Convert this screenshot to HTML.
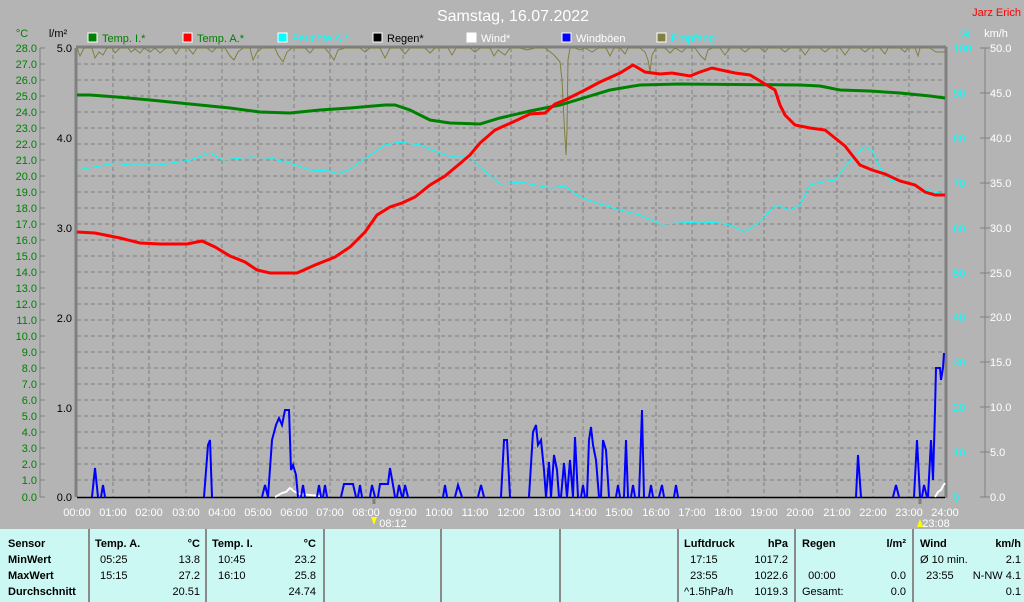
<!DOCTYPE html>
<html><head><meta charset="utf-8"><style>
html,body{margin:0;padding:0;width:1024px;height:602px;overflow:hidden;background:#b4b4b4;font-family:"Liberation Sans",sans-serif;}
svg{position:absolute;left:0;top:0}
.tbl{position:absolute;left:0;top:529px;width:1024px;height:73px;background:#ccf8f4;}
.c{position:absolute;font-size:11px;color:#000;line-height:16px;white-space:pre}
.b{font-weight:bold}
.sep{position:absolute;top:0;width:2px;height:73px;background:#8a8a8a}
</style></head><body>
<svg width="1024" height="529" xmlns="http://www.w3.org/2000/svg" font-family="Liberation Sans, sans-serif">
<text x="513" y="21" fill="#fff" font-size="16" text-anchor="middle">Samstag, 16.07.2022</text>
<text x="1021" y="16" fill="#ff0000" font-size="11" text-anchor="end">Jarz Erich</text>
<g font-size="11">
<text x="22" y="37" fill="#008000" text-anchor="middle">°C</text>
<text x="58" y="37" fill="#000" text-anchor="middle">l/m²</text>
<text x="965" y="37" fill="#00ffff" text-anchor="middle">%</text>
<text x="996" y="37" fill="#fff" text-anchor="middle">km/h</text>
<rect x="88" y="33" width="9" height="9" fill="#008000" stroke="#fff"/><text x="102" y="42" fill="#008000">Temp. I.*</text>
<rect x="183" y="33" width="9" height="9" fill="#ff0000" stroke="#fff"/><text x="197" y="42" fill="#008000">Temp. A.*</text>
<rect x="278" y="33" width="9" height="9" fill="#00ffff" stroke="#fff"/><text x="292" y="42" fill="#00ffff">Feuchte A.*</text>
<rect x="373" y="33" width="9" height="9" fill="#000" stroke="#fff"/><text x="387" y="42" fill="#000">Regen*</text>
<rect x="467" y="33" width="9" height="9" fill="#fff" stroke="#fff"/><text x="481" y="42" fill="#fff">Wind*</text>
<rect x="562" y="33" width="9" height="9" fill="#0000ff" stroke="#fff"/><text x="576" y="42" fill="#fff">Windböen</text>
<rect x="657" y="33" width="9" height="9" fill="#808040" stroke="#fff"/><text x="671" y="42" fill="#00ffff">Empfang</text>
</g>
<g stroke="#808080" stroke-dasharray="4,3" stroke-width="1">
<path d="M77 64H945M77 80H945M77 96H945M77 112H945M77 128H945M77 144H945M77 160H945M77 176H945M77 192H945M77 208H945M77 224H945M77 240H945M77 256H945M77 272H945M77 288H945M77 304H945M77 320H945M77 336H945M77 352H945M77 368H945M77 384H945M77 400H945M77 416H945M77 432H945M77 448H945M77 464H945M77 480H945"/>
<path d="M113 48V497M149 48V497M186 48V497M222 48V497M258 48V497M294 48V497M330 48V497M366 48V497M403 48V497M439 48V497M475 48V497M511 48V497M547 48V497M583 48V497M619 48V497M656 48V497M692 48V497M728 48V497M764 48V497M800 48V497M837 48V497M873 48V497M909 48V497"/>
</g>
<g stroke="#808080" stroke-width="3" fill="none">
<path d="M76 48V497M76 47H946M946 47V498"/>
</g>
<g stroke="#808080" stroke-width="1">
<path d="M40 48V497M985 48V497"/>
<path d="M40 48h5M40 64h5M40 80h5M40 96h5M40 112h5M40 128h5M40 144h5M40 160h5M40 176h5M40 192h5M40 208h5M40 224h5M40 240h5M40 256h5M40 272h5M40 288h5M40 304h5M40 320h5M40 336h5M40 352h5M40 368h5M40 384h5M40 400h5M40 416h5M40 432h5M40 448h5M40 464h5M40 480h5M40 497h5"/>
<path d="M980 48h10M980 93h10M980 138h10M980 183h10M980 228h10M980 273h10M980 317h10M980 362h10M980 407h10M980 452h10M980 497h10"/>
</g>
<path d="M77 497.5H945" stroke="#000" stroke-width="1.5"/>
<g stroke="#808080" stroke-width="3"><path d="M374 498v6M920 498v6"/></g>
<g font-size="11" fill="#008000" text-anchor="end">
<text x="37" y="52">28.0</text><text x="37" y="68">27.0</text><text x="37" y="84">26.0</text><text x="37" y="100">25.0</text><text x="37" y="116">24.0</text><text x="37" y="132">23.0</text><text x="37" y="148">22.0</text><text x="37" y="164">21.0</text><text x="37" y="180">20.0</text><text x="37" y="196">19.0</text><text x="37" y="212">18.0</text><text x="37" y="228">17.0</text><text x="37" y="244">16.0</text><text x="37" y="260">15.0</text><text x="37" y="276">14.0</text><text x="37" y="292">13.0</text><text x="37" y="308">12.0</text><text x="37" y="324">11.0</text><text x="37" y="340">10.0</text><text x="37" y="356">9.0</text><text x="37" y="372">8.0</text><text x="37" y="388">7.0</text><text x="37" y="404">6.0</text><text x="37" y="420">5.0</text><text x="37" y="436">4.0</text><text x="37" y="452">3.0</text><text x="37" y="468">2.0</text><text x="37" y="484">1.0</text><text x="37" y="501">0.0</text>
</g>
<g font-size="11" fill="#000" text-anchor="end">
<text x="72" y="52">5.0</text><text x="72" y="142">4.0</text><text x="72" y="232">3.0</text><text x="72" y="322">2.0</text><text x="72" y="412">1.0</text><text x="72" y="501">0.0</text>
</g>
<g font-size="11" fill="#00ffff">
<text x="953" y="52">100</text><text x="953" y="97">90</text><text x="953" y="142">80</text><text x="953" y="187">70</text><text x="953" y="232">60</text><text x="953" y="277">50</text><text x="953" y="321">40</text><text x="953" y="366">30</text><text x="953" y="411">20</text><text x="953" y="456">10</text><text x="953" y="501">0</text>
</g>
<g font-size="11" fill="#fff">
<text x="990" y="52">50.0</text><text x="990" y="97">45.0</text><text x="990" y="142">40.0</text><text x="990" y="187">35.0</text><text x="990" y="232">30.0</text><text x="990" y="277">25.0</text><text x="990" y="321">20.0</text><text x="990" y="366">15.0</text><text x="990" y="411">10.0</text><text x="990" y="456">5.0</text><text x="990" y="501">0.0</text>
</g>
<g font-size="11" fill="#fff" text-anchor="middle">
<text x="77" y="516">00:00</text><text x="113" y="516">01:00</text><text x="149" y="516">02:00</text><text x="186" y="516">03:00</text><text x="222" y="516">04:00</text><text x="258" y="516">05:00</text><text x="294" y="516">06:00</text><text x="330" y="516">07:00</text><text x="366" y="516">08:00</text><text x="403" y="516">09:00</text><text x="439" y="516">10:00</text><text x="475" y="516">11:00</text><text x="511" y="516">12:00</text><text x="547" y="516">13:00</text><text x="583" y="516">14:00</text><text x="619" y="516">15:00</text><text x="656" y="516">16:00</text><text x="692" y="516">17:00</text><text x="728" y="516">18:00</text><text x="764" y="516">19:00</text><text x="800" y="516">20:00</text><text x="837" y="516">21:00</text><text x="873" y="516">22:00</text><text x="909" y="516">23:00</text><text x="945" y="516">24:00</text>
<text x="393" y="527">08:12</text><text x="936" y="527">23:08</text>
</g>
<path d="M371 517l3 8 3-8z" fill="#ffff00"/><path d="M917 527l3-8 3 8z" fill="#ffff00"/>
<polyline fill="none" stroke="#808040" stroke-width="1" points="77,48 80,56 84,48 92,48 95,58 99,52 103,55 107,48 112,48 115,53 120,48 128,48 131,52 135,49 140,53 144,48 150,52 155,48 160,53 166,48 172,48 176,54 180,48 188,48 193,54 197,48 207,48 212,52 216,48 225,48 230,56 234,60 238,52 243,48 250,48 253,60 257,52 262,48 275,48 278,55 283,62 287,52 292,48 305,48 310,53 314,48 325,48 330,54 334,60 338,50 345,48 360,48 365,52 370,48 380,48 385,58 390,48 400,48 405,54 410,48 425,48 430,53 435,48 448,48 452,55 456,48 470,48 475,52 480,48 490,48 494,56 498,50 505,55 510,48 520,48 527,50 535,48 545,48 554,55 560,62 562,80 564,120 566,155 567,130 568,60 570,48 575,48 580,50 585,48 592,52 598,48 606,48 610,56 614,48 620,48 625,54 628,48 640,48 645,52 648,60 650,72 652,55 656,48 665,48 670,53 675,48 682,52 686,48 695,48 700,55 705,60 708,50 712,48 720,48 725,55 730,48 740,48 745,52 750,48 760,48 765,52 768,48 780,48 785,52 790,48 800,48 805,55 810,48 820,48 825,52 830,48 840,48 845,55 850,48 860,48 865,52 870,48 880,48 885,54 888,48 900,48 905,52 908,48 915,48 918,56 920,48 930,48 936,52 945,52"/>
<polyline fill="none" stroke="#00ffff" stroke-width="1" points="77,170 100,166 115,163 130,165 160,165 190,160 210,153 223,160 250,157 270,158 290,163 310,170 330,171 338,174 350,169 370,155 385,145 400,142 420,145 445,155 455,157 470,157 480,167 500,184 520,182 550,188 565,186 580,197 600,204 620,210 640,215 660,224 700,222 720,223 730,225 745,232 760,222 775,205 790,210 800,205 810,185 822,182 835,180 845,167 855,155 865,147 872,150 880,168 890,180 905,182 915,186 925,190 935,192 945,194"/>
<polyline fill="none" stroke="#008000" stroke-width="3" points="77,95 90,95 117,97 150,100 190,104 230,108 260,112 290,113 320,110 350,108 385,105 395,105 410,110 430,120 450,123 480,124 500,118 530,111 560,105 610,90 640,85 680,84 800,85 820,86 840,90 870,91 900,93 930,96 945,98"/>
<polyline fill="none" stroke="#ff0000" stroke-width="3" points="77,232 95,233 120,238 140,243 160,244 187,244 202,241 215,247 230,256 245,262 257,270 270,273 297,273 315,265 335,257 350,247 365,232 377,215 390,207 402,203 415,197 430,185 445,176 457,166 470,155 480,143 495,130 513,122 530,114 545,113 555,104 565,100 585,90 600,82 620,73 633,65 645,72 660,74 672,73 690,76 700,72 712,68 735,73 750,75 765,84 775,90 780,105 785,115 795,125 810,128 825,130 835,138 845,146 852,155 860,165 872,170 885,174 900,181 915,185 925,192 935,195 945,195"/>
<polyline fill="none" stroke="#fff" stroke-width="2" points="275,497 282,493 286,492 290,488 295,492 300,494 310,495 320,496"/>
<polyline fill="none" stroke="#fff" stroke-width="2" points="935,497 938,492 941,490 943,486 945,483"/>
<path fill="none" stroke="#0000ff" stroke-width="2" d="M92 497L95 468L98 497M101 497L103 485L105 497M204 497L208 445L210 440L212 497M262 497L265 485L268 497M268 497L272 440L276 425L279 418L282 425L285 410L289 410L291 470L293 465L296 475L298 497M301 497L303 485L305 497M317 497L319 485L321 497M323 497L325 485L327 497M341 497L344 484L353 484L356 497M358 497L360 485L362 497M370 497L372 485L375 497M378 497L380 484L388 484L390 468L393 485L395 497M397 497L399 485L402 497M403 497L405 485L408 497M443 497L445 485L447 497M455 497L458 485L462 497M478 497L481 485L484 497M501 497L504 440L507 440L510 497M529 497L533 432L536 425L538 445L541 440L544 470L546 497M546 497L549 462L551 497M551 497L554 455L557 470L559 497M561 497L564 463L567 497M567 497L570 460L573 497M573 497L575 437L578 497M581 497L583 485L585 497M587 497L589 440L591 427L593 445L596 460L599 497M601 497L603 440L606 450L609 497M616 497L618 485L620 497M624 497L626 440L628 497M631 497L633 485L635 497M639 497L642 410L644 497M649 497L651 485L653 497M659 497L662 485L664 497M674 497L676 485L678 497M856 497L858 455L861 497M893 497L896 485L899 497M914 497L917 440L920 497M922 497L924 485L927 497M928 497L931 440L933 480L935 410L936 368L940 368L941 380L943 368L944 353"/>
</svg>
<div class="tbl">
<div class="sep" style="left:88px"></div><div class="sep" style="left:205px"></div><div class="sep" style="left:323px"></div><div class="sep" style="left:440px"></div><div class="sep" style="left:559px"></div><div class="sep" style="left:677px"></div><div class="sep" style="left:794px"></div><div class="sep" style="left:912px"></div>
<div class="c b" style="left:8px;top:7px">Sensor
MinWert
MaxWert
Durchschnitt</div>
<div class="c b" style="left:95px;top:7px">Temp. A.</div>
<div class="c" style="left:100px;top:23px">05:25
15:15</div>
<div class="c" style="left:150px;top:7px;width:50px;text-align:right"><b>°C</b>
13.8
27.2
20.51</div>
<div class="c b" style="left:212px;top:7px">Temp. I.</div>
<div class="c" style="left:218px;top:23px">10:45
16:10</div>
<div class="c" style="left:266px;top:7px;width:50px;text-align:right"><b>°C</b>
23.2
25.8
24.74</div>
<div class="c b" style="left:684px;top:7px">Luftdruck</div>
<div class="c" style="left:684px;top:23px">  17:15
  23:55
^1.5hPa/h</div>
<div class="c" style="left:730px;top:7px;width:58px;text-align:right"><b>hPa</b>
1017.2
1022.6
1019.3</div>
<div class="c b" style="left:802px;top:7px">Regen</div>
<div class="c" style="left:802px;top:39px">  00:00
Gesamt:</div>
<div class="c" style="left:850px;top:7px;width:56px;text-align:right"><b>l/m²</b>

0.0
0.0</div>
<div class="c b" style="left:920px;top:7px">Wind</div>
<div class="c" style="left:920px;top:23px">Ø 10 min.
  23:55</div>
<div class="c" style="left:960px;top:7px;width:61px;text-align:right"><b>km/h</b>
2.1
N-NW 4.1
0.1</div>
</div>
</body></html>
